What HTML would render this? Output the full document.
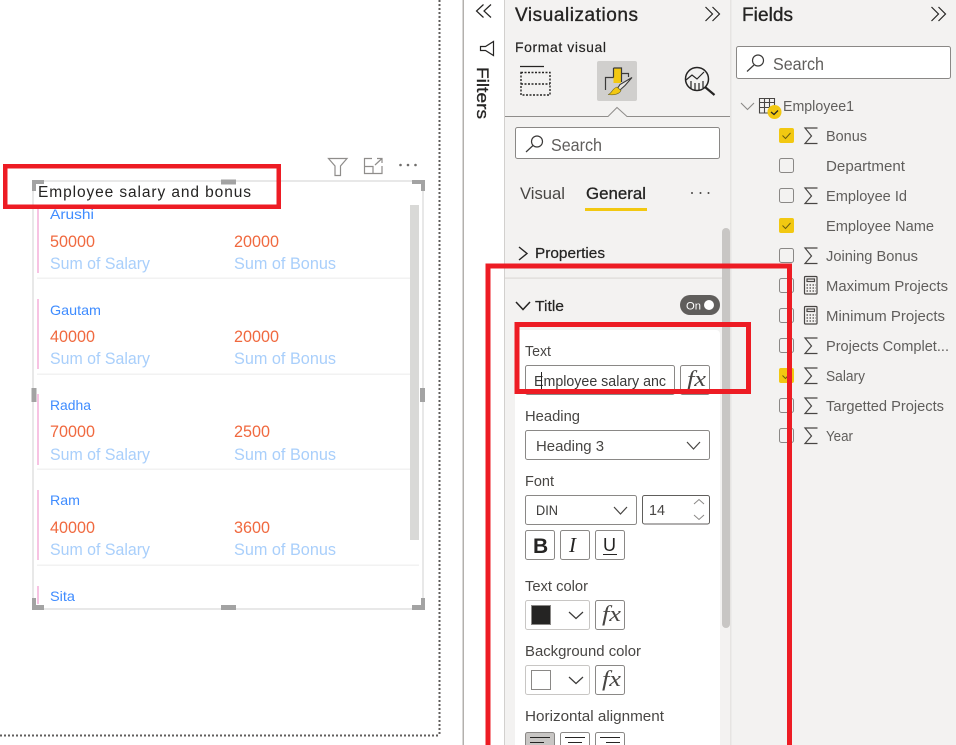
<!DOCTYPE html>
<html lang="en"><head><meta charset="utf-8"><title>Power BI</title>
<style>
html,body{margin:0;padding:0;background:#fff;width:956px;height:745px;overflow:hidden}
svg{display:block;position:absolute;left:0;top:0}
text{font-family:"Liberation Sans",sans-serif;fill:#3b3a39;white-space:pre}
.h{font-size:19px;fill:#252423;stroke:#252423;stroke-width:.35px}
.l{font-size:14.5px;fill:#484644}
.f{font-size:14.5px;fill:#605e5c}
.s{font-size:17.5px;fill:#605e5c}
.n{font-size:14px;fill:#3f8cff}
.v{font-size:16.5px;fill:#f0693f}
.c{font-size:16.5px;fill:#a9cffb}
.fx{font-family:"Liberation Serif",serif;font-style:italic;font-size:22px;fill:#484644}
.i{fill:none;stroke:#484644;stroke-width:1.2}
.b{fill:#fff;stroke:#8a8886;stroke-width:1}
.hd{fill:#a3a3a3}
.r{fill:#ed1c24}
</style></head><body>
<svg width="956" height="745" viewBox="0 0 956 745" xmlns="http://www.w3.org/2000/svg">
<rect width="956" height="745" fill="#fff"/>
<rect x="505" y="0" width="451" height="745" fill="#f3f2f1"/>
<rect x="462.5" y="0" width="1.5" height="745" fill="#b3b0ad"/>
<rect x="504" y="0" width="1" height="745" fill="#d2d0ce"/>
<rect x="730" y="0" width="1.5" height="745" fill="#e6e4e2"/>
<path d="M439.5 0V736M0 735.5H440" stroke="#605e5c" stroke-width="2" stroke-dasharray="2 2" fill="none"/>

<!-- visual header -->
<path d="M328.5 158.5H347L340.5 166V175.5H335V166Z" fill="none" stroke="#8f8d8b" stroke-width="1.2"/>
<path d="M372 158.5H364.5V173.5H382V166M364.5 166.5H373V173.5M375 165L382 158.5M377 158.5H382V163" fill="none" stroke="#8f8d8b" stroke-width="1.2"/>
<circle cx="400.5" cy="165" r="1.3" fill="#6f6d6b"/><circle cx="408" cy="165" r="1.3" fill="#6f6d6b"/><circle cx="415.5" cy="165" r="1.3" fill="#6f6d6b"/>

<!-- visual frame -->
<rect x="33" y="181" width="390" height="428" fill="#fff" stroke="#d8d8d8" stroke-width="1.2"/>
<rect x="410" y="205" width="9" height="335" fill="#d9d9d7"/>

<!-- cards -->
<rect x="37" y="207" width="2" height="66" fill="#f7c3e3"/>
<rect x="37" y="277.5" width="373" height="1.5" fill="#f2f2f2"/>
<text class="n" x="50" y="219" textLength="44" lengthAdjust="spacingAndGlyphs">Arushi</text>
<text class="v" x="50" y="247" textLength="45" lengthAdjust="spacingAndGlyphs">50000</text>
<text class="v" x="234" y="247" textLength="45" lengthAdjust="spacingAndGlyphs">20000</text>
<text class="c" x="50" y="269" textLength="100" lengthAdjust="spacingAndGlyphs">Sum of Salary</text>
<text class="c" x="234" y="269" textLength="102" lengthAdjust="spacingAndGlyphs">Sum of Bonus</text>

<rect x="37" y="299" width="2" height="70" fill="#f7c3e3"/>
<rect x="37" y="373.5" width="373" height="1.5" fill="#f2f2f2"/>
<text class="n" x="50" y="315" textLength="51" lengthAdjust="spacingAndGlyphs">Gautam</text>
<text class="v" x="50" y="342" textLength="45" lengthAdjust="spacingAndGlyphs">40000</text>
<text class="v" x="234" y="342" textLength="45" lengthAdjust="spacingAndGlyphs">20000</text>
<text class="c" x="50" y="364" textLength="100" lengthAdjust="spacingAndGlyphs">Sum of Salary</text>
<text class="c" x="234" y="364" textLength="102" lengthAdjust="spacingAndGlyphs">Sum of Bonus</text>

<rect x="37" y="394" width="2" height="71" fill="#f7c3e3"/>
<rect x="37" y="468.5" width="373" height="1.5" fill="#f2f2f2"/>
<text class="n" x="50" y="410" textLength="41" lengthAdjust="spacingAndGlyphs">Radha</text>
<text class="v" x="50" y="437" textLength="45" lengthAdjust="spacingAndGlyphs">70000</text>
<text class="v" x="234" y="437" textLength="36" lengthAdjust="spacingAndGlyphs">2500</text>
<text class="c" x="50" y="460" textLength="100" lengthAdjust="spacingAndGlyphs">Sum of Salary</text>
<text class="c" x="234" y="460" textLength="102" lengthAdjust="spacingAndGlyphs">Sum of Bonus</text>

<rect x="37" y="490" width="2" height="70" fill="#f7c3e3"/>
<rect x="37" y="564.5" width="382" height="1.5" fill="#f2f2f2"/>
<text class="n" x="50" y="505" textLength="30" lengthAdjust="spacingAndGlyphs">Ram</text>
<text class="v" x="50" y="533" textLength="45" lengthAdjust="spacingAndGlyphs">40000</text>
<text class="v" x="234" y="533" textLength="36" lengthAdjust="spacingAndGlyphs">3600</text>
<text class="c" x="50" y="555" textLength="100" lengthAdjust="spacingAndGlyphs">Sum of Salary</text>
<text class="c" x="234" y="555" textLength="102" lengthAdjust="spacingAndGlyphs">Sum of Bonus</text>

<rect x="37" y="586" width="2" height="18" fill="#f7c3e3"/>
<text class="n" x="50" y="601" textLength="25" lengthAdjust="spacingAndGlyphs">Sita</text>

<!-- handles -->
<path class="hd" d="M32 180H44V184H36V191H32Z"/>
<path class="hd" d="M412 180H425V191H421V184H412Z"/>
<path class="hd" d="M32 598H36V605H44V610H32Z"/>
<path class="hd" d="M421 598H425V610H412V605H421Z"/>
<rect class="hd" x="221" y="179.500" width="15" height="5"/>
<rect class="hd" x="221" y="605" width="15" height="5"/>
<rect class="hd" x="31.500" y="388" width="5" height="14"/>
<rect class="hd" x="420" y="388" width="5" height="14"/>

<text x="38" y="197" font-size="15.5" style="fill:#252423" textLength="213" lengthAdjust="spacing">Employee salary and bonus</text>

<!-- filters strip -->
<path class="i" style="stroke:#252423" d="M483.500 4.500L476.500 11L483.500 17.500M491 4.500L484 11L491 17.500"/>
<path class="i" style="stroke:#252423" d="M493.500 41.500V55.500L485.500 50.500H480.500V46.500H485.500Z"/>
<text transform="translate(477,67) rotate(90)" font-size="17" style="fill:#252423;stroke:#252423;stroke-width:.3px" textLength="52" lengthAdjust="spacingAndGlyphs">Filters</text>

<!-- Visualizations header -->
<text class="h" x="515" y="21" textLength="123" lengthAdjust="spacing">Visualizations</text>
<path class="i" style="stroke:#252423" d="M705.500 7L712.500 14L705.500 21M712.500 7L719.500 14L712.500 21"/>
<text x="515" y="52" font-size="14" style="fill:#252423;stroke:#252423;stroke-width:.15px" textLength="91" lengthAdjust="spacing">Format visual</text>

<!-- fields icon -->
<path d="M520 66.500H544" stroke="#252423" stroke-width="1.2"/>
<path d="M521 72.500H550V95H521ZM521 84H550" fill="none" stroke="#252423" stroke-width="1.4" stroke-dasharray="2 1.500"/>
<!-- format icon -->
<rect x="597" y="61" width="40" height="40" rx="2" fill="#d0cfcd"/>
<rect x="613.500" y="68" width="7.500" height="15" fill="#f2c811"/>
<path d="M605.500 90V77.500H613.500M613.500 68H621.500V73.500H628.500V77M613.500 68V77.500M621.500 73.500V82" fill="none" stroke="#3b3a39" stroke-width="1.2"/>
<path d="M632 77.500L620 84.500L617.500 88.500L620 90L625 85.500Z" fill="#e8e7e5" stroke="#3b3a39" stroke-width="1.100"/>
<path d="M608 94.500C612 93.500 612 88.500 617 87L621 90.500C619.500 94 614 95.500 608 94.500Z" fill="#f2c811" stroke="#6d6420" stroke-width=".6"/>
<!-- analytics icon -->
<circle cx="697" cy="79" r="11.500" fill="none" stroke="#252423" stroke-width="1.500"/>
<path d="M686 80L692 75L697 79L704 72M691 81V89M695 83V90M699 83V90M703 81V88" fill="none" stroke="#252423" stroke-width="1.200"/>
<path d="M705 87L714.500 95" stroke="#252423" stroke-width="2.200"/>

<path d="M505 116.500H608L617 107.500L627 116.500H730" fill="#f3f2f1" stroke="#8f8d8b" stroke-width="1"/>

<!-- viz search -->
<rect x="515.500" y="127.500" width="204" height="31" rx="2" class="b"/>
<path class="i" style="stroke:#3b3a39" d="M526 152L533 145.500"/><circle cx="537" cy="141.500" r="5.500" fill="none" stroke="#3b3a39" stroke-width="1.200"/>
<text class="s" x="551" y="151" textLength="51" lengthAdjust="spacingAndGlyphs">Search</text>

<text x="520" y="199" font-size="17" style="fill:#484644" textLength="45" lengthAdjust="spacingAndGlyphs">Visual</text>
<text x="586" y="199" font-size="17" style="fill:#252423;stroke:#252423;stroke-width:.3px" textLength="60" lengthAdjust="spacingAndGlyphs">General</text>
<rect x="585" y="208" width="62" height="3" fill="#f2c811"/>
<circle cx="692" cy="193" r="1" fill="#484644"/><circle cx="700.500" cy="193" r="1" fill="#484644"/><circle cx="708.500" cy="193" r="1" fill="#484644"/>

<!-- scrollbar -->
<rect x="722" y="228" width="8" height="400" rx="4" fill="#c8c6c4"/>

<!-- Properties -->
<path class="i" style="stroke:#252423;stroke-width:1.400" d="M519 247L527 253.500L519 260"/>
<text x="535" y="258" font-size="14.500" style="fill:#252423;stroke:#252423;stroke-width:.2px" textLength="70" lengthAdjust="spacingAndGlyphs">Properties</text>
<rect x="505" y="277.500" width="217" height="1.200" fill="#dcdad8"/>

<!-- Title -->
<path class="i" style="stroke:#252423;stroke-width:1.500" d="M516 302L523 309.500L530 302"/>
<text x="535" y="311" font-size="15" style="fill:#252423;stroke:#252423;stroke-width:.2px" textLength="29" lengthAdjust="spacingAndGlyphs">Title</text>
<rect x="680" y="295" width="40" height="20" rx="10" fill="#605e5c"/>
<text x="686" y="309.500" font-size="11" style="fill:#fff" textLength="15" lengthAdjust="spacingAndGlyphs">On</text>
<circle cx="709" cy="305" r="5" fill="#fff"/>

<!-- card -->
<path d="M515 745V334a4 4 0 0 1 4-4H716a4 4 0 0 1 4 4V745Z" fill="#fff"/>

<text class="l" x="525" y="356" textLength="26" lengthAdjust="spacingAndGlyphs">Text</text>
<rect class="b" x="525.500" y="365.500" width="149" height="29" rx="2"/>
<text x="534" y="386" font-size="14.500" style="fill:#3b3a39" textLength="132" lengthAdjust="spacingAndGlyphs">Employee salary anc</text>
<rect x="541" y="372" width="1" height="20" fill="#252423"/>
<rect class="b" x="680.500" y="365.500" width="29" height="29" rx="2"/>
<text class="fx" x="687" y="386" textLength="19" lengthAdjust="spacingAndGlyphs">fx</text>

<text class="l" x="525" y="421" textLength="55" lengthAdjust="spacingAndGlyphs">Heading</text>
<rect class="b" x="525.500" y="430.500" width="184" height="29" rx="2"/>
<text class="l" x="536" y="451" textLength="68" lengthAdjust="spacingAndGlyphs">Heading 3</text>
<path class="i" d="M687 442L693.500 449L700 442"/>

<text class="l" x="525" y="486" textLength="29" lengthAdjust="spacingAndGlyphs">Font</text>
<rect class="b" x="525.500" y="495.500" width="111" height="29" rx="2"/>
<text x="536" y="515" font-size="14" style="fill:#3b3a39" textLength="22" lengthAdjust="spacingAndGlyphs">DIN</text>
<path class="i" d="M614 507L620.500 514L627 507"/>
<rect x="642.500" y="495.500" width="67" height="28.500" rx="2" fill="#fff" stroke="#605e5c"/>
<text class="l" x="649" y="515" textLength="16" lengthAdjust="spacingAndGlyphs">14</text>
<path fill="none" stroke="#8a8886" d="M694 504L699 499.500L704 504M694 515L699 519.500L704 515"/>

<rect class="b" x="525.500" y="530.500" width="29" height="29" rx="2"/>
<text x="533" y="553" font-size="21" font-weight="bold" style="fill:#252423">B</text>
<rect class="b" x="560.500" y="530.500" width="29" height="29" rx="2"/>
<text x="569" y="552" font-size="21" style="font-family:'Liberation Serif',serif;font-style:italic;fill:#252423">I</text>
<rect class="b" x="595.500" y="530.500" width="29" height="29" rx="2"/>
<text x="603" y="551" font-size="18" style="fill:#252423">U</text>
<rect x="603" y="554" width="14" height="1" fill="#252423"/>

<text class="l" x="525" y="591" textLength="63" lengthAdjust="spacingAndGlyphs">Text color</text>
<rect x="525.500" y="600.500" width="64" height="29" rx="2" fill="#fff" stroke="#c8c6c4"/>
<rect x="531.500" y="605.500" width="19" height="19" fill="#252423" stroke="#8a8886"/>
<path class="i" style="stroke:#3b3a39" d="M569 612L576 618.500L583 612"/>
<rect class="b" x="595.500" y="600.500" width="29" height="29" rx="2"/>
<text class="fx" x="602" y="621" textLength="19" lengthAdjust="spacingAndGlyphs">fx</text>

<text class="l" x="525" y="656" textLength="116" lengthAdjust="spacingAndGlyphs">Background color</text>
<rect x="525.500" y="665.500" width="64" height="29" rx="2" fill="#fff" stroke="#c8c6c4"/>
<rect x="531.500" y="670.500" width="19" height="19" fill="#fff" stroke="#8a8886"/>
<path class="i" style="stroke:#3b3a39" d="M569 677L576 683.500L583 677"/>
<rect class="b" x="595.500" y="665.500" width="29" height="29" rx="2"/>
<text class="fx" x="602" y="686" textLength="19" lengthAdjust="spacingAndGlyphs">fx</text>

<text class="l" x="525" y="721" textLength="139" lengthAdjust="spacingAndGlyphs">Horizontal alignment</text>
<rect x="525.500" y="732.500" width="29" height="20" rx="2" fill="#c8c6c4" stroke="#8a8886"/>
<rect class="b" x="560.500" y="732.500" width="29" height="20" rx="2"/>
<rect class="b" x="595.500" y="732.500" width="29" height="20" rx="2"/>
<path stroke="#252423" fill="none" d="M530 737.500H550M530 742.500H544M565 737.500H585M568 742.500H582M600 737.500H620M606 742.500H620"/>

<!-- Fields pane -->
<text class="h" x="742" y="21" textLength="51" lengthAdjust="spacing">Fields</text>
<path class="i" style="stroke:#252423" d="M931.500 7L938.500 14L931.500 21M938.500 7L945.500 14L938.500 21"/>
<rect class="b" x="736.500" y="46.500" width="214" height="32" rx="2"/>
<path class="i" style="stroke:#3b3a39" d="M747 71.500L754 65"/><circle cx="758" cy="60.500" r="5.500" fill="none" stroke="#3b3a39" stroke-width="1.200"/>
<text class="s" x="773" y="70" textLength="51" lengthAdjust="spacingAndGlyphs">Search</text>

<path fill="none" stroke="#8a8886" stroke-width="1.100" d="M741 103L747.500 109.500L754 103"/>
<path fill="none" stroke="#484644" stroke-width="1.100" d="M759.500 98.500H774.500V113H759.500ZM759.500 102.500H774.500M759.500 107.500H774.500M764.500 98.500V113M769.500 98.500V113"/>
<circle cx="774.500" cy="112" r="7" fill="#f2c811"/>
<path d="M771 112L774 114.500L778 110.500" fill="none" stroke="#252423" stroke-width="1.300"/>
<text x="783" y="111" font-size="15" style="fill:#605e5c" textLength="71" lengthAdjust="spacingAndGlyphs">Employee1</text>

<!-- checkboxes -->
<g fill="#f3f2f1" stroke="#8a8886">
<rect x="779.500" y="158.500" width="14" height="14" rx="2"/>
<rect x="779.500" y="188.500" width="14" height="14" rx="2"/>
<rect x="779.500" y="248.500" width="14" height="14" rx="2"/>
<rect x="779.500" y="278.500" width="14" height="14" rx="2"/>
<rect x="779.500" y="308.500" width="14" height="14" rx="2"/>
<rect x="779.500" y="338.500" width="14" height="14" rx="2"/>
<rect x="779.500" y="398.500" width="14" height="14" rx="2"/>
<rect x="779.500" y="428.500" width="14" height="14" rx="2"/>
</g>
<g fill="#f2c811">
<rect x="779" y="128" width="15" height="15" rx="2"/>
<rect x="779" y="218" width="15" height="15" rx="2"/>
<rect x="779" y="368" width="15" height="15" rx="2"/>
</g>
<g fill="none" stroke="#6b5c10" stroke-width="1">
<path d="M782.500 135.500L785.500 138.500L790.500 133"/>
<path d="M782.500 225.500L785.500 228.500L790.500 223"/>
<path d="M782.500 375.500L785.500 378.500L790.500 373"/>
</g>

<!-- sigmas -->
<g fill="none" stroke="#484644" stroke-width="1.200">
<path d="M817.500 128H805L811.500 136L805 143.500H817.500"/>
<path d="M817.500 188H805L811.500 196L805 203.500H817.500"/>
<path d="M817.500 248H805L811.500 256L805 263.500H817.500"/>
<path d="M817.500 338H805L811.500 346L805 353.500H817.500"/>
<path d="M817.500 368H805L811.500 376L805 383.500H817.500"/>
<path d="M817.500 398H805L811.500 406L805 413.500H817.500"/>
<path d="M817.500 428H805L811.500 436L805 443.500H817.500"/>
<rect x="804.500" y="276.500" width="12.500" height="17.500" rx="1"/>
<rect x="804.500" y="306.500" width="12.500" height="17.500" rx="1"/>
<rect x="807" y="279" width="7.500" height="2.500"/>
<rect x="807" y="309" width="7.500" height="2.500"/>
<path stroke-dasharray="1.500 1.500" d="M806.500 285H816M806.500 288H816M806.500 291H816M806.500 315H816M806.500 318H816M806.500 321H816"/>
</g>

<!-- field labels -->
<text class="f" x="826" y="141" textLength="41" lengthAdjust="spacingAndGlyphs">Bonus</text>
<text class="f" x="826" y="171" textLength="79" lengthAdjust="spacingAndGlyphs">Department</text>
<text class="f" x="826" y="201" textLength="81" lengthAdjust="spacingAndGlyphs">Employee Id</text>
<text class="f" x="826" y="231" textLength="108" lengthAdjust="spacingAndGlyphs">Employee Name</text>
<text class="f" x="826" y="261" textLength="92" lengthAdjust="spacingAndGlyphs">Joining Bonus</text>
<text class="f" x="826" y="291" textLength="122" lengthAdjust="spacingAndGlyphs">Maximum Projects</text>
<text class="f" x="826" y="321" textLength="119" lengthAdjust="spacingAndGlyphs">Minimum Projects</text>
<text class="f" x="826" y="351" textLength="123" lengthAdjust="spacingAndGlyphs">Projects Complet...</text>
<text class="f" x="826" y="381" textLength="39" lengthAdjust="spacingAndGlyphs">Salary</text>
<text class="f" x="826" y="411" textLength="118" lengthAdjust="spacingAndGlyphs">Targetted Projects</text>
<text class="f" x="826" y="441" textLength="27" lengthAdjust="spacingAndGlyphs">Year</text>

<!-- red annotations -->
<g class="r">
<rect class="r" x="3" y="164" width="278" height="4.500"/>
<rect class="r" x="3" y="204.500" width="278" height="4.500"/>
<rect class="r" x="3" y="164" width="4.500" height="45"/>
<rect class="r" x="276.500" y="164" width="4.500" height="45"/>

<rect class="r" x="485.500" y="263.500" width="306.500" height="5"/>
<rect class="r" x="485.500" y="263.500" width="5" height="482"/>
<rect class="r" x="787" y="263.500" width="5" height="482"/>

<rect class="r" x="514.500" y="322" width="236.500" height="5"/>
<rect class="r" x="514.500" y="389" width="236.500" height="5"/>
<rect class="r" x="514.500" y="322" width="5" height="72"/>
<rect class="r" x="746" y="322" width="5" height="72"/>
</g>
</svg>
</body></html>
